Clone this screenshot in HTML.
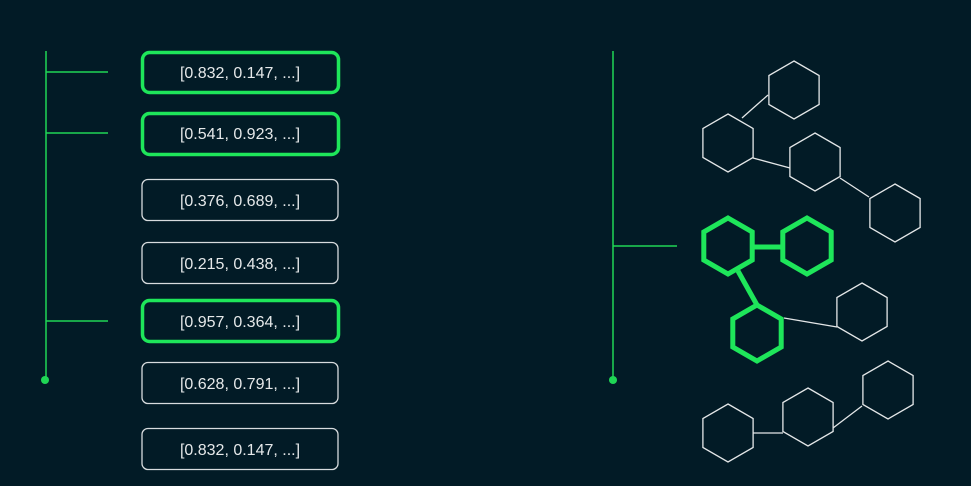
<!DOCTYPE html>
<html><head><meta charset="utf-8"><style>
html,body{margin:0;padding:0;background:#021b26;width:971px;height:486px;overflow:hidden}
svg{display:block}
text{font-family:"Liberation Sans",sans-serif;font-size:16px;fill:#e6e9ea;text-anchor:middle}
</style></head><body>
<svg width="971" height="486" viewBox="0 0 971 486" xmlns="http://www.w3.org/2000/svg">
<rect width="971" height="486" fill="#021b26"/>
<g stroke="#1fd655" stroke-width="1.5" fill="none">
<line x1="46" y1="51" x2="46" y2="380"/>
<line x1="46" y1="72" x2="108" y2="72"/>
<line x1="46" y1="133" x2="108" y2="133"/>
<line x1="46" y1="321" x2="108" y2="321"/>
<line x1="613" y1="51" x2="613" y2="380"/>
<line x1="613" y1="246" x2="677" y2="246"/>
</g>
<circle cx="45" cy="380" r="4" fill="#1fd655"/>
<circle cx="613" cy="380" r="4" fill="#1fd655"/>
<g fill="none">
<rect x="142.5" y="52.5" width="196" height="40" rx="7" stroke="#1ee65a" stroke-width="3.5"/>
<rect x="142.5" y="113.5" width="196" height="41" rx="7" stroke="#1ee65a" stroke-width="3.5"/>
<rect x="142" y="179.5" width="196" height="41" rx="6" stroke="#d8dcde" stroke-width="1.3"/>
<rect x="142" y="242.5" width="196" height="41" rx="6" stroke="#d8dcde" stroke-width="1.3"/>
<rect x="142.5" y="300.5" width="196" height="41" rx="7" stroke="#1ee65a" stroke-width="3.5"/>
<rect x="142" y="362.5" width="196" height="41" rx="6" stroke="#d8dcde" stroke-width="1.3"/>
<rect x="142" y="428.5" width="196" height="41" rx="6" stroke="#d8dcde" stroke-width="1.3"/>
</g>
<text x="240" y="78">[0.832, 0.147, ...]</text>
<text x="240" y="139">[0.541, 0.923, ...]</text>
<text x="240" y="206">[0.376, 0.689, ...]</text>
<text x="240" y="269">[0.215, 0.438, ...]</text>
<text x="240" y="327">[0.957, 0.364, ...]</text>
<text x="240" y="389">[0.628, 0.791, ...]</text>
<text x="240" y="455">[0.832, 0.147, ...]</text>
<defs>
<polygon id="h" points="0,-29 25.1,-14.5 25.1,14.5 0,29 -25.1,14.5 -25.1,-14.5"/>
<polygon id="g" points="0,-28 24.2,-14 24.2,14 0,28 -24.2,14 -24.2,-14"/>
</defs>
<g stroke="#e4e7e8" stroke-width="1.3" fill="none">
<line x1="742" y1="118" x2="768" y2="95"/>
<line x1="753" y1="158" x2="790" y2="168"/>
<line x1="840" y1="178" x2="869" y2="197"/>
<line x1="784" y1="318" x2="837" y2="327"/>
<line x1="753" y1="433" x2="783" y2="433"/>
<line x1="833" y1="428" x2="862" y2="406"/>
<use href="#h" x="794" y="90"/>
<use href="#h" x="728" y="143"/>
<use href="#h" x="815" y="162"/>
<use href="#h" x="895" y="213"/>
<use href="#h" x="862" y="312"/>
<use href="#h" x="728" y="433"/>
<use href="#h" x="808" y="417"/>
<use href="#h" x="888" y="390"/>
</g>
<g stroke="#1ee65a" stroke-width="5" fill="none" stroke-linejoin="miter">
<line x1="752" y1="247" x2="783" y2="247"/>
<line x1="738" y1="271" x2="757" y2="305"/>
<use href="#g" x="728" y="246"/>
<use href="#g" x="807" y="246"/>
<use href="#g" x="757" y="333"/>
</g>
</svg>
</body></html>
